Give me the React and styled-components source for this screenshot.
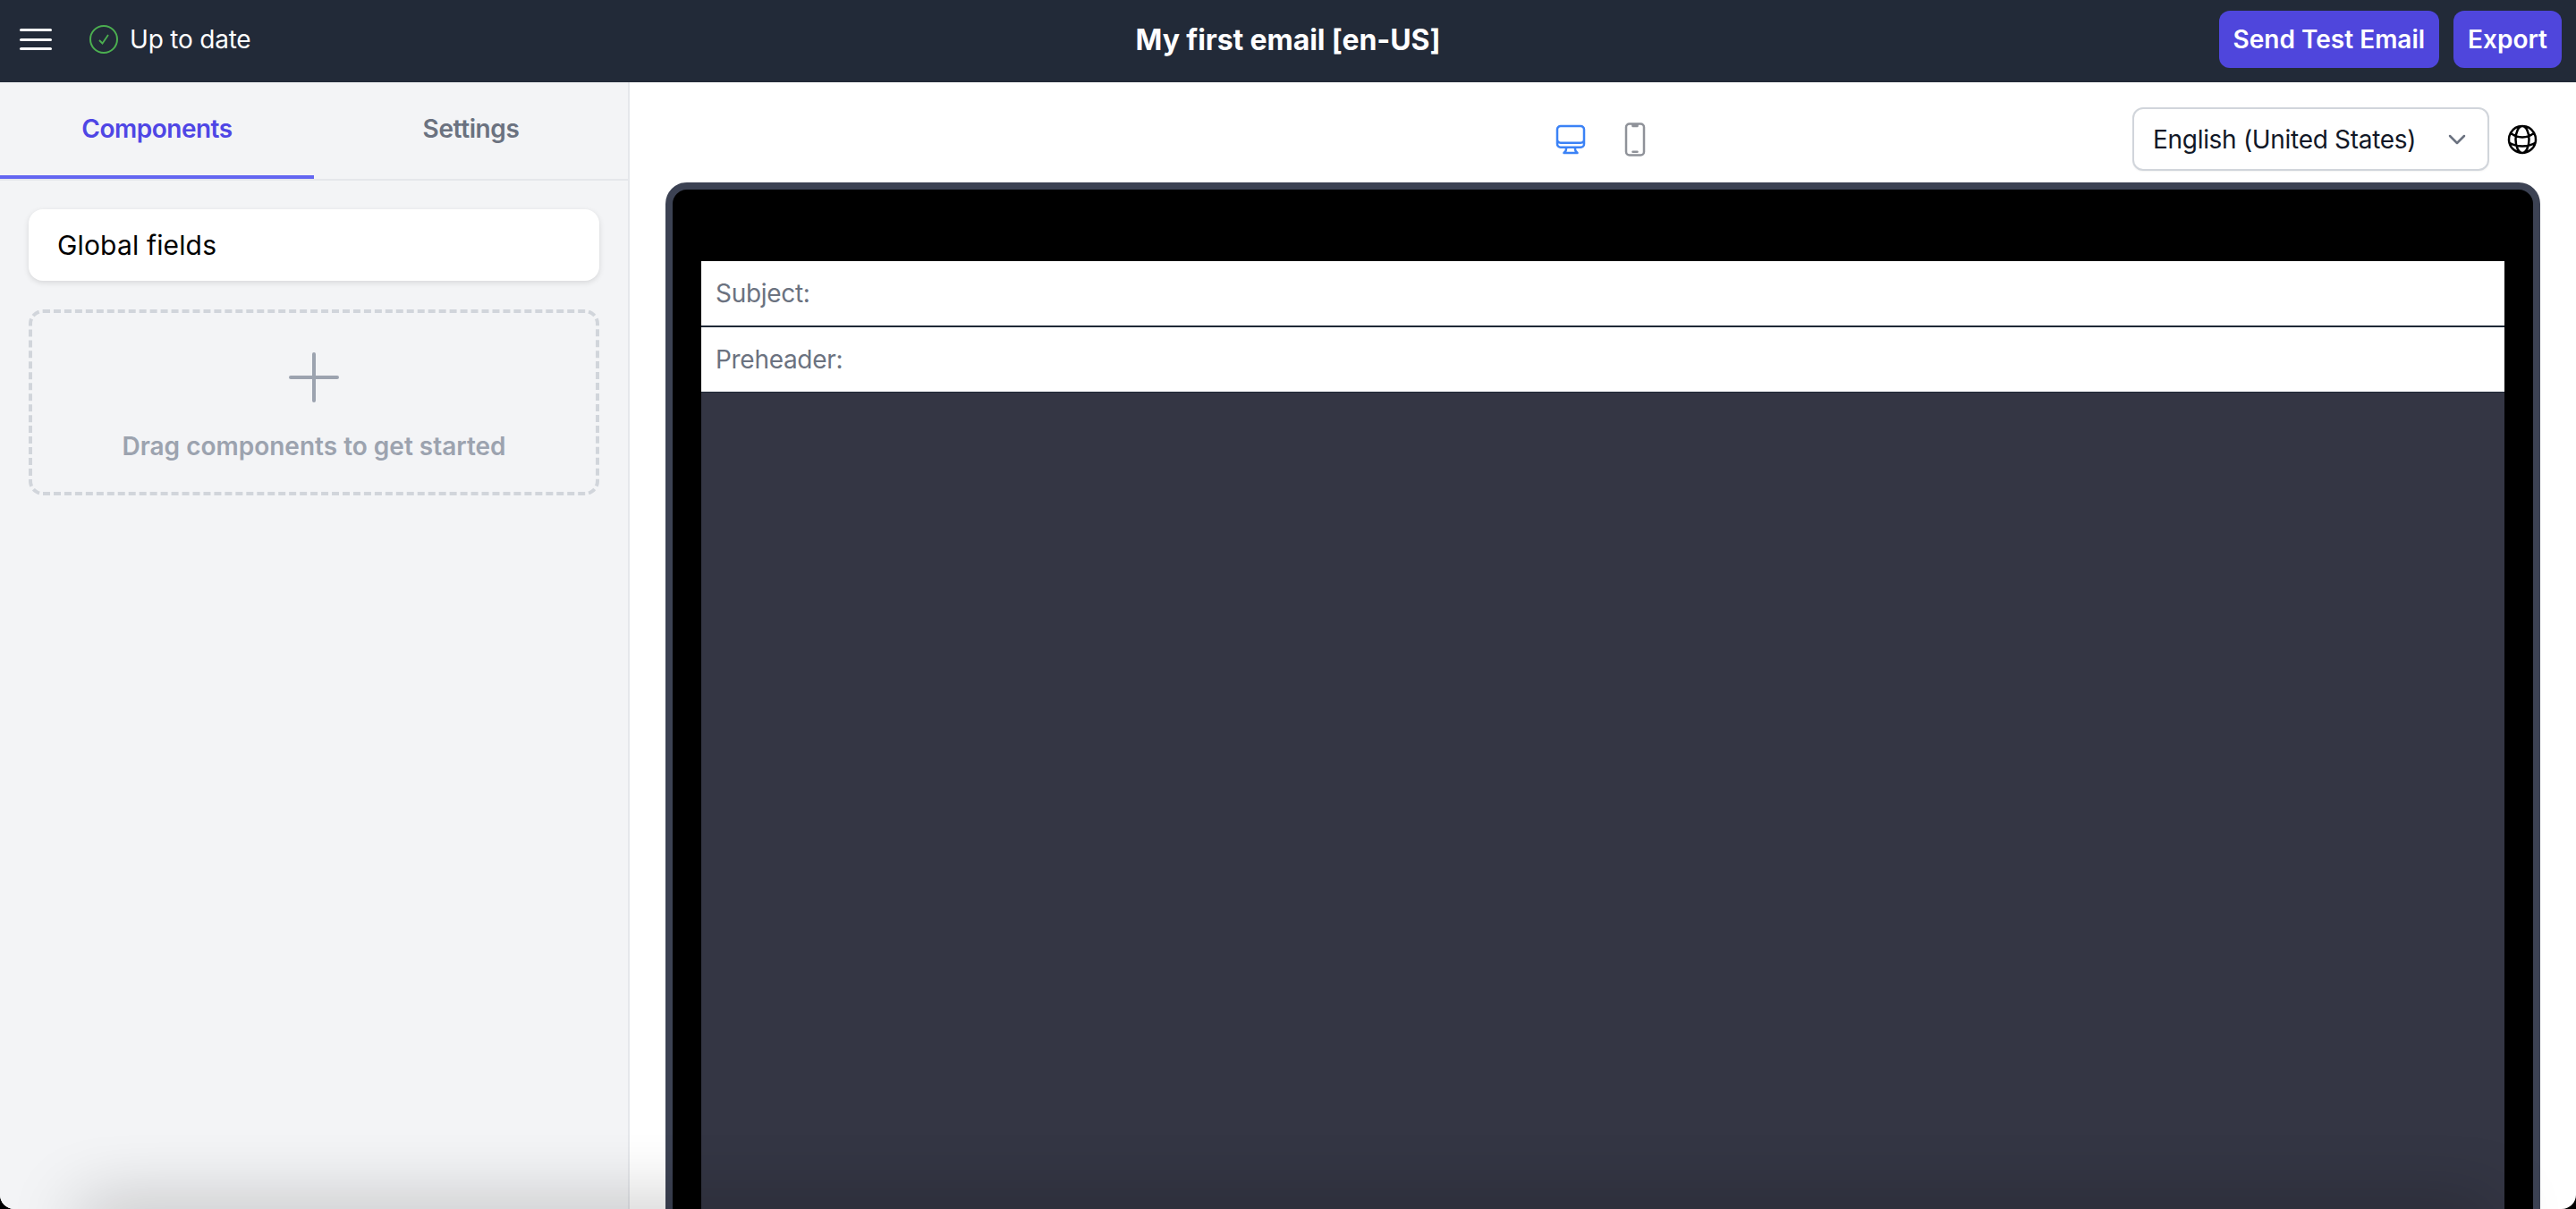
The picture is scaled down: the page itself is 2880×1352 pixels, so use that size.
import React from 'react';
import styled, { createGlobalStyle } from 'styled-components';

const GlobalStyle = createGlobalStyle`
  html, body {
    margin: 0;
    height: 100%;
    background: #000;
    overflow: hidden;
  }
  * {
    box-sizing: border-box;
  }
  #root {
    height: 100%;
  }
`;

const Page = styled.div`
  position: relative;
  height: 100vh;
  display: flex;
  flex-direction: column;
  overflow: hidden;
  background: #fff;
  border-radius: 0 0 16px 16px;
  font-family: Inter, 'Noto Sans', sans-serif;
`;

const Header = styled.header`
  height: 92px;
  flex-shrink: 0;
  display: grid;
  grid-template-columns: 1fr auto 1fr;
  align-items: center;
  padding: 0 16px 4px;
  background: #222a38;
  color: #fff;
`;

const HeaderLeft = styled.div`
  display: flex;
  align-items: center;
  padding-left: 6px;
`;

const MenuButton = styled.button`
  width: 36px;
  height: 24px;
  padding: 0;
  margin-right: 42px;
  display: flex;
  flex-direction: column;
  justify-content: space-between;
  background: none;
  border: none;
  cursor: pointer;

  span {
    display: block;
    height: 3px;
    border-radius: 2px;
    background: #fff;
  }
`;

const Status = styled.div`
  display: flex;
  align-items: center;
  gap: 13px;
  font-size: 28px;
  letter-spacing: -0.2px;
`;

const Title = styled.h1`
  margin: 0;
  font-size: 32px;
  font-weight: 700;
  letter-spacing: -0.1px;
`;

const HeaderActions = styled.div`
  display: flex;
  justify-content: flex-end;
  gap: 16px;
`;

const ActionButton = styled.button`
  height: 64px;
  padding: 0 16px;
  border: none;
  border-radius: 12px;
  background: #4f46dc;
  color: #fff;
  font-family: inherit;
  font-size: 28px;
  font-weight: 600;
  cursor: pointer;
`;

const Body = styled.div`
  flex: 1;
  min-height: 0;
  display: flex;
`;

const Sidebar = styled.aside`
  width: 704px;
  flex-shrink: 0;
  background: #f3f4f6;
  border-right: 2px solid #e5e7eb;
`;

const Tabs = styled.div`
  height: 110px;
  display: flex;
  border-bottom: 2px solid #e5e7eb;
`;

const Tab = styled.button`
  flex: 1;
  height: 108px;
  padding: 0;
  border: none;
  border-bottom: 4px solid ${({ $active }) => ($active ? '#6366f1' : 'transparent')};
  background: none;
  color: ${({ $active }) => ($active ? '#4f46e5' : '#6b7280')};
  font-family: inherit;
  font-size: 28px;
  font-weight: 600;
  letter-spacing: ${({ $active }) => ($active ? '-0.5px' : '-0.4px')};
  cursor: pointer;
`;

const SidebarContent = styled.div`
  display: flex;
  flex-direction: column;
  gap: 32px;
  padding: 32px;
`;

const GlobalCard = styled.div`
  height: 80px;
  display: flex;
  align-items: center;
  padding: 0 32px;
  border-radius: 16px;
  background: #fff;
  box-shadow: 0 2px 6px rgba(0, 0, 0, 0.12);
  color: #000;
  font-size: 30px;
  letter-spacing: 0.15px;
`;

const DropZone = styled.div`
  height: 208px;
  display: flex;
  flex-direction: column;
  align-items: center;
  padding-top: 44px;
  border: 4px dashed #d1d5db;
  border-radius: 16px;
  color: #9ca3af;
  font-size: 28px;
  font-weight: 600;
`;

const PlusIcon = styled.svg`
  display: block;
  margin-bottom: 32px;
  fill: none;
  stroke: #9ca3af;
  stroke-width: 4;
  stroke-linecap: round;
`;

const Main = styled.main`
  flex: 1;
  min-width: 0;
  display: flex;
  flex-direction: column;
  padding: 0 40px;
`;

const Toolbar = styled.div`
  position: relative;
  height: 112px;
  flex-shrink: 0;
  display: flex;
  align-items: center;
  justify-content: center;
  gap: 32px;
  padding-top: 16px;
`;

const DeviceIcon = styled.svg`
  display: block;
  fill: none;
  stroke: ${({ $active }) => ($active ? '#3b82f6' : '#8f9299')};
  stroke-width: 1.5;
  stroke-linecap: round;
  stroke-linejoin: round;
`;

const LocaleGroup = styled.div`
  position: absolute;
  top: 28px;
  right: 0;
  display: flex;
  align-items: center;
  gap: 17px;
`;

const LocaleSelect = styled.div`
  width: 399px;
  height: 71px;
  display: flex;
  align-items: center;
  justify-content: space-between;
  padding: 0 24px 0 21px;
  border: 2px solid #d1d5db;
  border-radius: 12px;
  box-shadow: 0 1px 2px rgba(0, 0, 0, 0.05);
  background: #fff;
  color: #111827;
  font-size: 28px;
  letter-spacing: -0.3px;
`;

const DeviceFrame = styled.div`
  flex: 1;
  min-height: 0;
  display: flex;
  flex-direction: column;
  padding: 80px 32px 0;
  border: 8px solid #3c4253;
  border-bottom: none;
  border-radius: 24px 24px 0 0;
  background: #000;
`;

const EmailField = styled.div`
  height: ${({ $height }) => $height}px;
  flex-shrink: 0;
  display: flex;
  align-items: center;
  padding: 0 16px;
  background: #fff;
  border-bottom: ${({ $divider }) => ($divider ? '2px solid #1f2937' : 'none')};
  color: #6b7280;
  font-size: 28px;
  letter-spacing: -0.3px;
`;

const EmailBody = styled.div`
  flex: 1;
  background: #343644;
  border-top: 1px solid #1f2937;
`;

const BottomShade = styled.div`
  position: absolute;
  left: 90px;
  right: 90px;
  bottom: -40px;
  height: 40px;
  box-shadow: 0 0 80px rgba(0, 0, 0, 0.32);
  pointer-events: none;
`;

const CheckCircle = () => (
  <svg width="32" height="32" viewBox="0 0 32 32" fill="none" stroke="#4caf50" strokeWidth="2">
    <circle cx="16" cy="16" r="15" />
    <path d="M11 17l3.5 3.5L21 11" strokeWidth="1.8" />
  </svg>
);

const DesktopIcon = () => (
  <DeviceIcon $active width="40" height="40" viewBox="0 0 24 24">
    <path d="M9 17.25v1.007a3 3 0 0 1-.879 2.122L7.5 21h9l-.621-.621A3 3 0 0 1 15 18.257V17.25m6-12V15a2.25 2.25 0 0 1-2.25 2.25H5.25A2.25 2.25 0 0 1 3 15V5.25m18 0A2.25 2.25 0 0 0 18.75 3H5.25A2.25 2.25 0 0 0 3 5.25m18 0V12a2.25 2.25 0 0 1-2.25 2.25H5.25A2.25 2.25 0 0 1 3 12V5.25" />
  </DeviceIcon>
);

const PhoneIcon = () => (
  <DeviceIcon width="40" height="40" viewBox="0 0 24 24">
    <path d="M10.5 1.5H8.25A2.25 2.25 0 0 0 6 3.75v16.5a2.25 2.25 0 0 0 2.25 2.25h7.5A2.25 2.25 0 0 0 18 20.25V3.75a2.25 2.25 0 0 0-2.25-2.25H13.5m-3 0V3h3V1.5m-3 0h3m-3 18.75h3" />
  </DeviceIcon>
);

const Chevron = () => (
  <svg width="20" height="12" viewBox="0 0 20 12" fill="none" stroke="#6b7280" strokeWidth="2.5" strokeLinecap="round" strokeLinejoin="round">
    <path d="M2 2l8 8 8-8" />
  </svg>
);

const GlobeIcon = () => (
  <svg width="40" height="40" viewBox="0 0 24 24" fill="none" stroke="#000" strokeWidth="1.5" strokeLinecap="round" strokeLinejoin="round">
    <path d="M12 21a9.004 9.004 0 0 0 8.716-6.747M12 21a9.004 9.004 0 0 1-8.716-6.747M12 21c2.485 0 4.5-4.03 4.5-9S14.485 3 12 3m0 18c-2.485 0-4.5-4.03-4.5-9S9.515 3 12 3m0 0a8.997 8.997 0 0 1 7.843 4.582M12 3a8.997 8.997 0 0 0-7.843 4.582m15.686 0A11.953 11.953 0 0 1 12 10.5c-2.998 0-5.74-1.1-7.843-2.918m15.686 0A8.959 8.959 0 0 1 21 12c0 .778-.099 1.533-.284 2.253m0 0A17.919 17.919 0 0 1 12 16.5c-3.162 0-6.133-.815-8.716-2.247m0 0A9.015 9.015 0 0 1 3 12c0-1.605.42-3.113 1.157-4.418" />
  </svg>
);

const App = () => {
  return (
    <>
      <GlobalStyle />
      <Page>
        <Header>
          <HeaderLeft>
            <MenuButton aria-label="Menu">
              <span />
              <span />
              <span />
            </MenuButton>
            <Status>
              <CheckCircle />
              Up to date
            </Status>
          </HeaderLeft>
          <Title>My first email [en-US]</Title>
          <HeaderActions>
            <ActionButton>Send Test Email</ActionButton>
            <ActionButton>Export</ActionButton>
          </HeaderActions>
        </Header>
        <Body>
          <Sidebar>
            <Tabs>
              <Tab $active>Components</Tab>
              <Tab>Settings</Tab>
            </Tabs>
            <SidebarContent>
              <GlobalCard>Global fields</GlobalCard>
              <DropZone>
                <PlusIcon width="56" height="56" viewBox="0 0 56 56">
                  <path d="M28 2v52M2 28h52" />
                </PlusIcon>
                Drag components to get started
              </DropZone>
            </SidebarContent>
          </Sidebar>
          <Main>
            <Toolbar>
              <DesktopIcon />
              <PhoneIcon />
              <LocaleGroup>
                <LocaleSelect>
                  English (United States)
                  <Chevron />
                </LocaleSelect>
                <GlobeIcon />
              </LocaleGroup>
            </Toolbar>
            <DeviceFrame>
              <EmailField $height={74} $divider>Subject:</EmailField>
              <EmailField $height={72}>Preheader:</EmailField>
              <EmailBody />
            </DeviceFrame>
          </Main>
        </Body>
        <BottomShade />
      </Page>
    </>
  );
};

export default App;
